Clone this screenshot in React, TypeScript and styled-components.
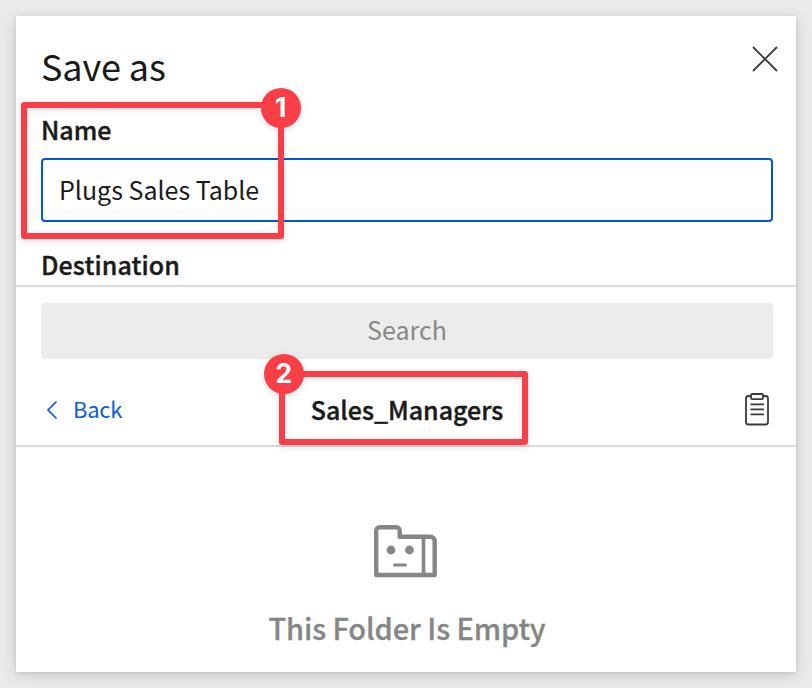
import React from 'react';
import styled, { createGlobalStyle } from 'styled-components';

const GlobalStyle = createGlobalStyle`
  * { box-sizing: border-box; }
  body {
    margin: 0;
    background: #eaeaea;
    color: #1a1a1a;
    font-family: "Noto Sans CJK SC", "Noto Sans", sans-serif;
  }
`;

const Page = styled.main`
  height: 688px;
  padding: 16px;
  overflow: hidden;
`;

const Dialog = styled.section`
  display: flex;
  flex-direction: column;
  width: 780px;
  height: 656px;
  background: #fff;
  box-shadow: 0 3px 14px rgba(0, 0, 0, 0.13), 0 1px 4px rgba(0, 0, 0, 0.1);
`;

const Header = styled.header`
  display: flex;
  justify-content: space-between;
  height: 95px;
  padding: 29px 18px 0 25px;
`;

const Title = styled.h1`
  margin: 0;
  font-size: 36px;
  font-weight: 400;
  line-height: 40px;
  letter-spacing: -0.1px;
  white-space: nowrap;
`;

const IconButton = styled.button`
  display: flex;
  padding: 0;
  border: 0;
  background: none;
  color: #3a3a3a;
`;

const Field = styled.div`
  position: relative;
  height: 127px;
  padding: 0 23px 0 25px;
`;

const Label = styled.label`
  display: block;
  height: 47px;
  font-size: 25px;
  font-weight: 500;
  line-height: 36px;
  -webkit-text-stroke: 0.4px currentColor;
  white-space: nowrap;
`;

const NameInput = styled.input`
  display: block;
  width: 100%;
  height: 64px;
  padding: 0 16px 2px;
  border: 2px solid #0056e0;
  border-radius: 4px;
  outline: 0;
  background: #fff;
  color: #1a1a1a;
  font: 400 25px/36px "Noto Sans CJK SC", "Noto Sans", sans-serif;
`;

const Destination = styled.div`
  height: 47px;
  padding: 8px 25px 0;
`;

const DestinationLabel = styled(Label)`
  letter-spacing: 0.1px;
`;

const Browser = styled.div`
  display: flex;
  flex-direction: column;
  height: 162px;
  padding: 16px 23px 0 25px;
  border-top: 2px solid #d9d9d9;
  border-bottom: 2px solid #d9d9d9;
`;

const Search = styled.div`
  height: 56px;
  flex: none;
  border-radius: 4px;
  background: #ececec;
  color: #888;
  font-size: 25px;
  line-height: 52px;
  text-align: center;
`;

const NavRow = styled.nav`
  display: grid;
  grid-template-columns: 1fr auto 1fr;
  align-items: center;
  height: 84px;
  padding: 16px 3px 0 5px;
`;

const Back = styled.a`
  display: flex;
  align-items: center;
  gap: 15px;
  color: #0b5ae0;
  font-size: 22px;
  line-height: 32px;
`;

const BackIcon = styled.svg`
  margin-top: 2px;
`;

const BackText = styled.span`
  margin-top: -2px;
  letter-spacing: -0.3px;
`;

const FolderName = styled.div`
  position: relative;
  margin: 0 2px 0 0;
  font-size: 25px;
  font-weight: 500;
  line-height: 36px;
  -webkit-text-stroke: 0.4px currentColor;
  white-space: nowrap;
`;

const NavAction = styled(IconButton)`
  justify-self: end;
`;

const Empty = styled.div`
  display: flex;
  flex: 1;
  flex-direction: column;
  align-items: center;
  padding-top: 77px;
  color: #868686;
`;

const EmptyIcon = styled.svg`
  margin-right: 1px;
`;

const EmptyText = styled.p`
  margin: 28px 0 0 2px;
  font-size: 29px;
  font-weight: 500;
  line-height: 42px;
  letter-spacing: -0.1px;
  -webkit-text-stroke: 0.3px currentColor;
  white-space: nowrap;
`;

const Highlight = styled.div<{ $x: number; $y: number; $w: number; $h: number }>`
  position: absolute;
  z-index: 1;
  left: ${(p) => p.$x}px;
  top: ${(p) => p.$y}px;
  width: ${(p) => p.$w}px;
  height: ${(p) => p.$h}px;
  border: 6px solid #f93e48;
  border-radius: 3px;
  filter: drop-shadow(0 2px 3px rgba(0, 0, 0, 0.13));
  -webkit-text-stroke: 0;
  pointer-events: none;
`;

const Badge = styled.span<{ $x: number; $y: number }>`
  position: absolute;
  left: ${(p) => p.$x}px;
  top: ${(p) => p.$y}px;
  width: 40px;
  height: 40px;
  border-radius: 50%;
  background: #f93e48;
  color: #fff;
  font: 700 27px/39px Inter, sans-serif;
  text-align: center;
`;

export default function App() {
  return (
    <Page>
      <GlobalStyle />
      <Dialog>
        <Header>
          <Title>Save as</Title>
          <IconButton aria-label="Close">
            <svg width="27" height="28" viewBox="0 0 27 28" fill="none" stroke="currentColor" strokeWidth="1.8">
              <path d="M2 2 26 26M26 2 2 26" />
            </svg>
          </IconButton>
        </Header>
        <Field>
          <Label htmlFor="name">Name</Label>
          <NameInput id="name" defaultValue="Plugs Sales Table" />
          <Highlight $x={5} $y={-9} $w={263} $h={137}>
            <Badge $x={233.5} $y={-20}>1</Badge>
          </Highlight>
        </Field>
        <Destination>
          <DestinationLabel as="div">Destination</DestinationLabel>
        </Destination>
        <Browser>
          <Search>Search</Search>
          <NavRow>
            <Back>
              <BackIcon width="12" height="20" viewBox="0 0 12 20" fill="none" stroke="currentColor" strokeWidth="1.7">
                <path d="M10.500 1.500 2 10l8.500 8.500" />
              </BackIcon>
              <BackText>Back</BackText>
            </Back>
            <FolderName>
              Sales_Managers
              <Highlight $x={-32} $y={-20} $w={249} $h={74}>
                <Badge $x={-21} $y={-23.5}>2</Badge>
              </Highlight>
            </FolderName>
            <NavAction aria-label="Copy path">
              <svg width="26" height="34" viewBox="0 0 26 34" fill="none" stroke="currentColor" strokeWidth="1.8">
                <path d="M7 4H4.500a2.500 2.500 0 0 0-2.500 2.500v23.500a2.500 2.500 0 0 0 2.500 2.500h17a2.500 2.500 0 0 0 2.500-2.500V6.500a2.500 2.500 0 0 0-2.500-2.500h-2.500" />
                <rect x="7" y="2" width="12" height="5.200" rx="1.200" />
                <path d="M6.500 12.300h13.500M6.500 17.300h13.500M6.500 22.300h13.500" />
              </svg>
            </NavAction>
          </NavRow>
        </Browser>
        <Empty>
          <EmptyIcon width="63" height="54" viewBox="0 0 63 54" fill="none" stroke="currentColor">
            <path strokeWidth="4.400" strokeLinejoin="round" d="M2.200 51V6.700a3.500 3.500 0 0 1 3.500-3.500h16.500a3.500 3.500 0 0 1 3.500 3.500v6h30.500a4.500 4.500 0 0 1 4.500 4.500v33.800z" />
            <path strokeWidth="3.600" d="M49.500 13v37" />
            <path strokeWidth="3" d="M19.200 41h13.600" />
            <circle cx="17" cy="26" r="4.400" fill="currentColor" stroke="none" />
            <circle cx="35.500" cy="26" r="4.400" fill="currentColor" stroke="none" />
          </EmptyIcon>
          <EmptyText>This Folder Is Empty</EmptyText>
        </Empty>
      </Dialog>
    </Page>
  );
}
